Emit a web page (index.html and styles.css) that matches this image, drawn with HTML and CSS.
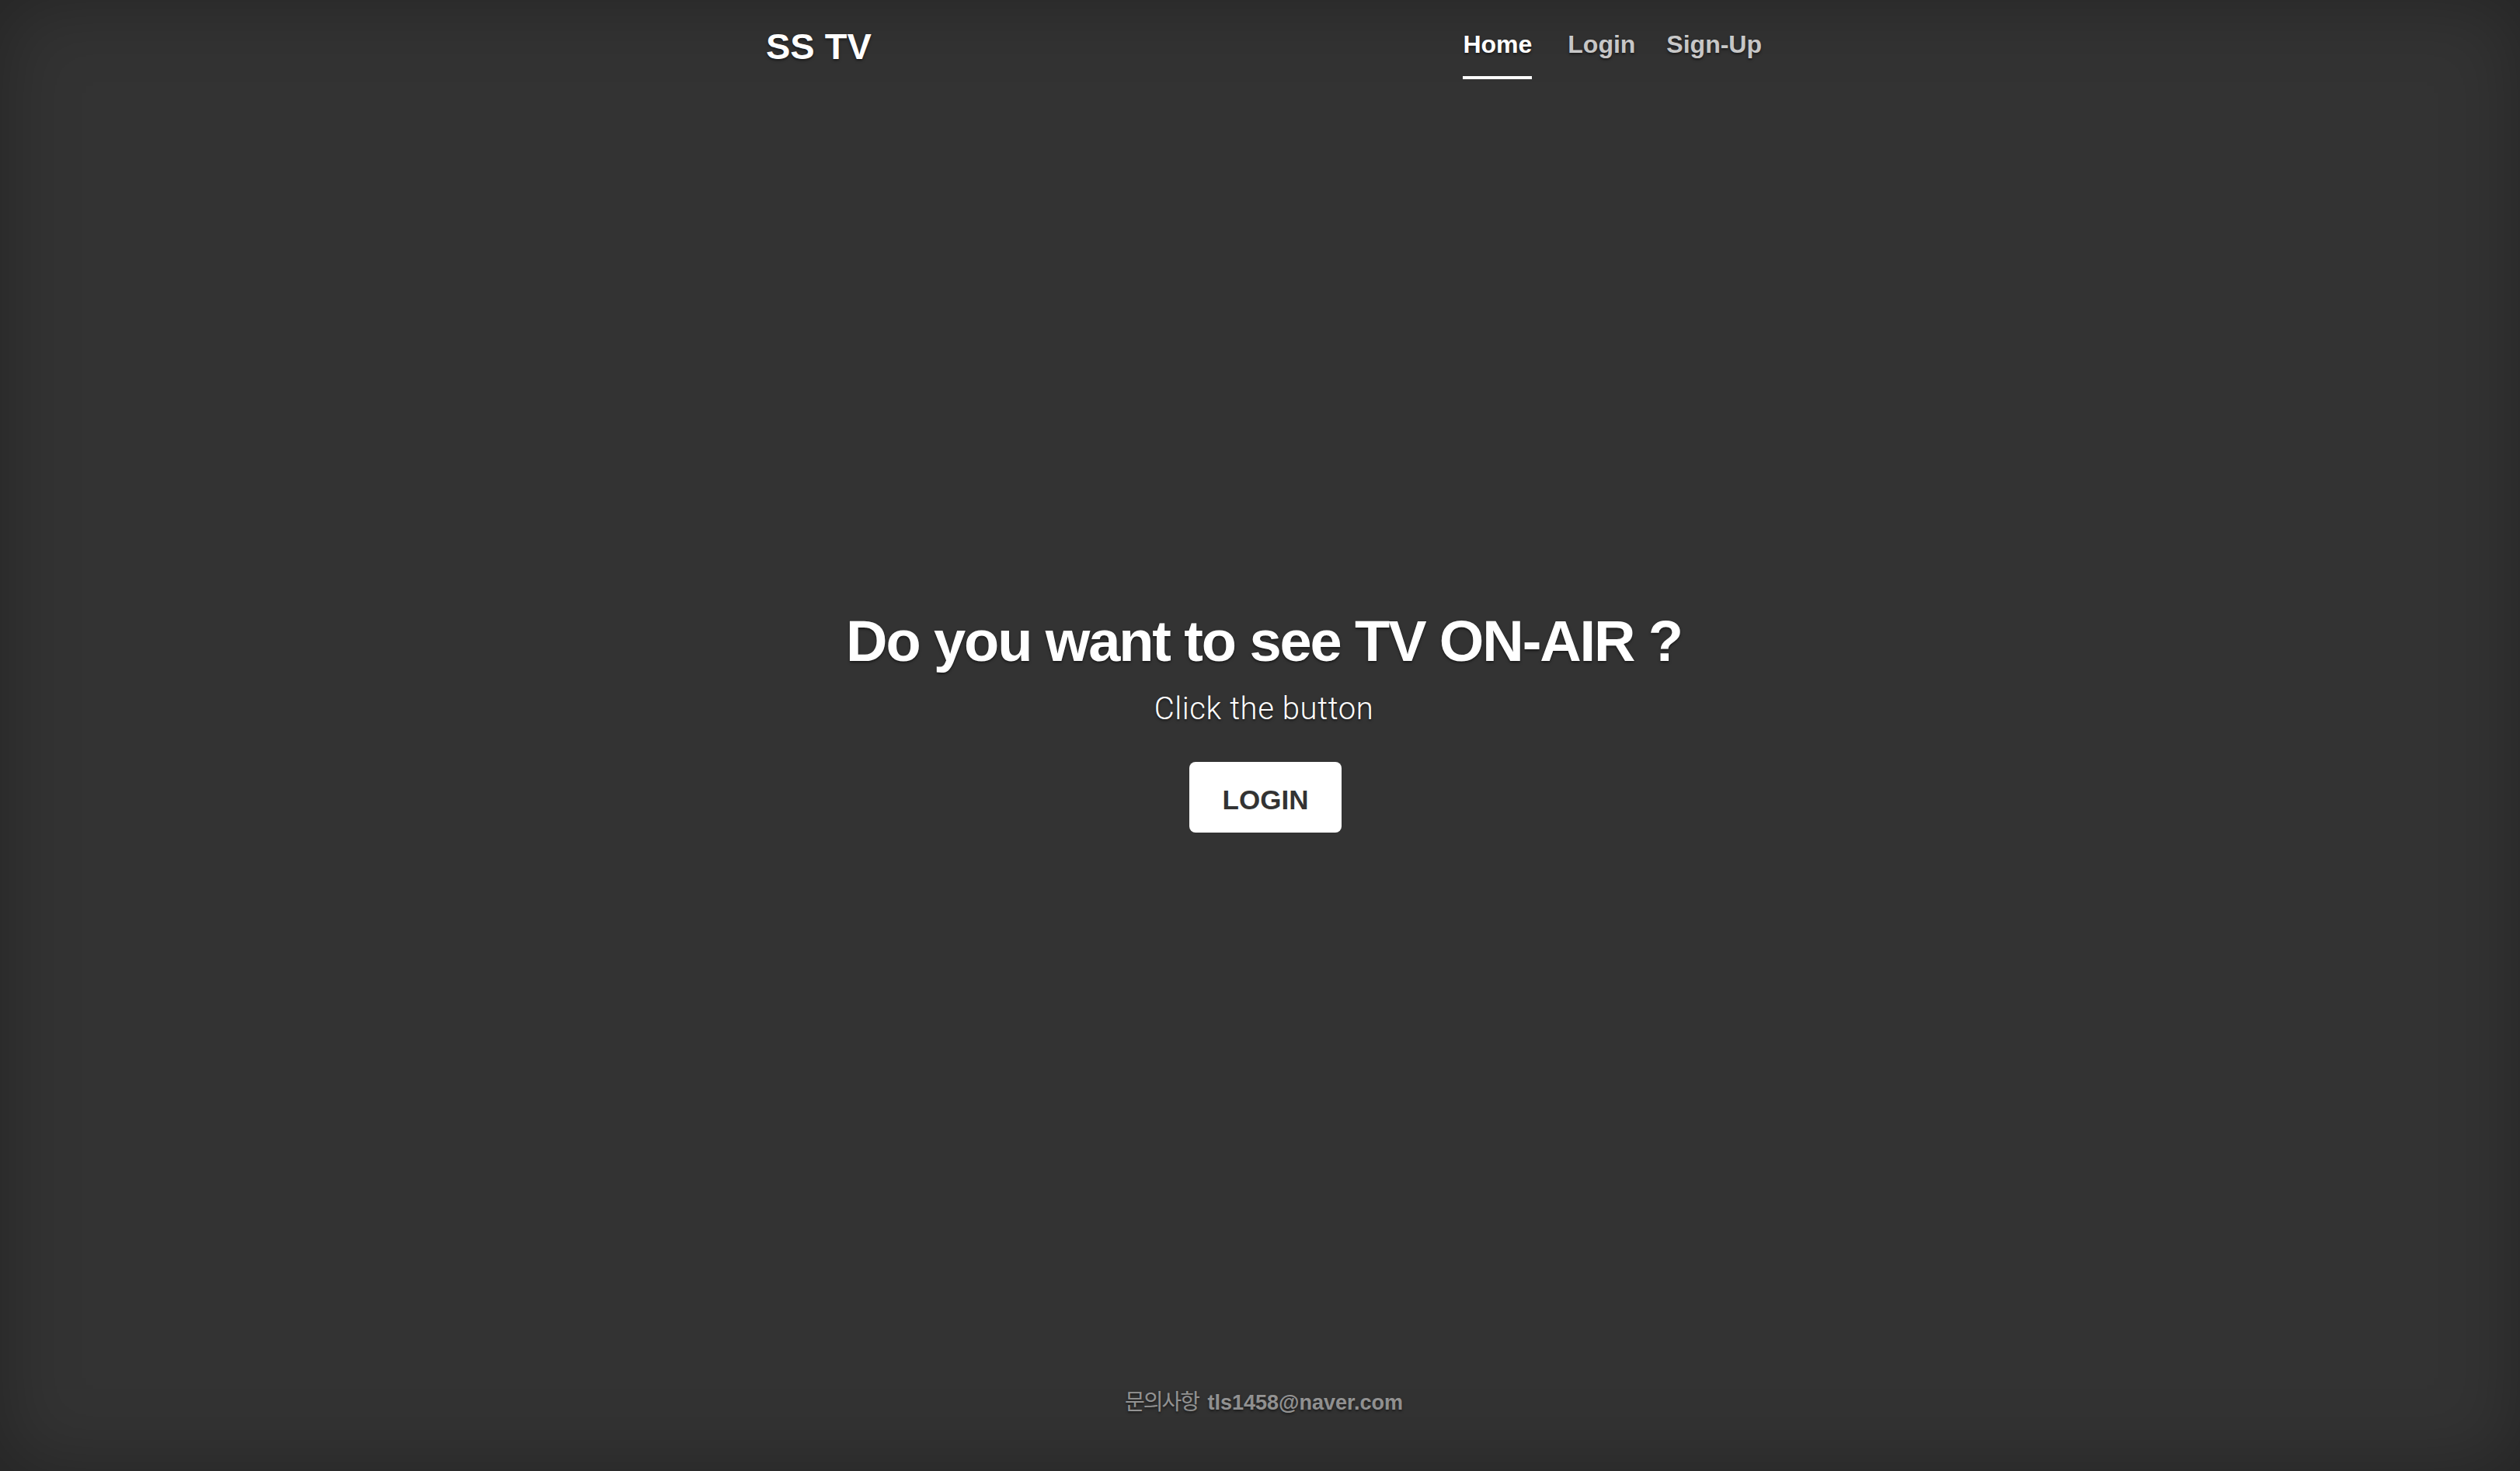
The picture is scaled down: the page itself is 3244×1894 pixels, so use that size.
FILE: index.html
```html
<!DOCTYPE html>
<html lang="ko">
<head>
<meta charset="utf-8">
<title>SS TV</title>
<link rel="stylesheet" href="styles.css">
</head>
<body>
<div class="cover">
  <header class="masthead">
    <h3 class="brand">SS TV</h3>
    <nav class="nav">
      <a class="nav-link active" href="#">Home</a>
      <a class="nav-link" href="#">Login</a>
      <a class="nav-link" href="#">Sign-Up</a>
    </nav>
  </header>
  <main class="inner">
    <h1 class="heading">Do you want to see TV ON-AIR ?</h1>
    <p class="lead">Click the button</p>
    <a class="btn" href="#">LOGIN</a>
  </main>
  <footer class="mastfoot">
    <p class="foot-text"><span class="ko">문의사항</span> <b>tls1458@naver.com</b></p>
  </footer>
</div>
</body>
</html>
```
FILE: styles.css
```css
html, body {
  height: 100%;
}
body {
  margin: 0;
  padding-left: 10px;
  box-sizing: border-box;
  background-color: #333;
  box-shadow: inset 0 0 100px rgba(0, 0, 0, .3);
  color: #fff;
  font-family: "Liberation Sans", Arial, sans-serif;
  text-shadow: 0 1.6px 3.2px rgba(0, 0, 0, .5);
  display: flex;
}
.cover {
  width: 1282px;
  margin: 0 auto;
  display: flex;
  flex-direction: column;
  height: 100%;
}
.masthead {
  display: flex;
  justify-content: space-between;
  align-items: flex-start;
  padding-top: 32px;
}
.brand {
  margin: 0;
  font-size: 47px;
  line-height: 56px;
  font-weight: 700;
}
.nav {
  display: flex;
  padding-top: 1px;
}
.nav-link {
  font-size: 32px;
  line-height: 48px;
  font-weight: 700;
  color: rgba(255, 255, 255, .75);
  text-decoration: none;
  padding-bottom: 17px;
  border-bottom: 4px solid transparent;
}
.nav-link + .nav-link {
  margin-left: 40px;
}
.nav-link.active {
  color: #fff;
  border-bottom-color: #fff;
  margin-right: 6px;
}
.inner {
  flex: 1;
  display: flex;
  flex-direction: column;
  align-items: center;
  justify-content: center;
  padding-bottom: 31px;
  text-align: center;
}
.heading {
  margin: 0;
  font-size: 74px;
  line-height: 1.2;
  font-weight: 700;
  letter-spacing: -2.1px;
}
.lead {
  margin: 14px 0 0;
  font-family: Roboto, "Liberation Sans", sans-serif;
  font-size: 40px;
  line-height: 58.5px;
  font-weight: 300;
  letter-spacing: 0.6px;
}
.btn {
  display: inline-block;
  margin-top: 38px;
  padding: 23px 43px 17px;
  font-size: 35px;
  line-height: 51px;
  font-weight: 700;
  color: #333;
  background: #fff;
  border-radius: 8px;
  text-decoration: none;
  text-shadow: none;
  transform: translateX(2px);
}
.mastfoot {
  padding-bottom: 68px;
  color: rgba(255, 255, 255, .5);
  text-align: center;
}
.foot-text {
  margin: 0;
  font-size: 27px;
  line-height: 40.5px;
  word-spacing: 4px;
}
.ko {
  font-family: "Noto Sans CJK KR", sans-serif;
  font-size: 28px;
  letter-spacing: -2px;
}
.foot-text b {
  font-weight: 700;
}
```
